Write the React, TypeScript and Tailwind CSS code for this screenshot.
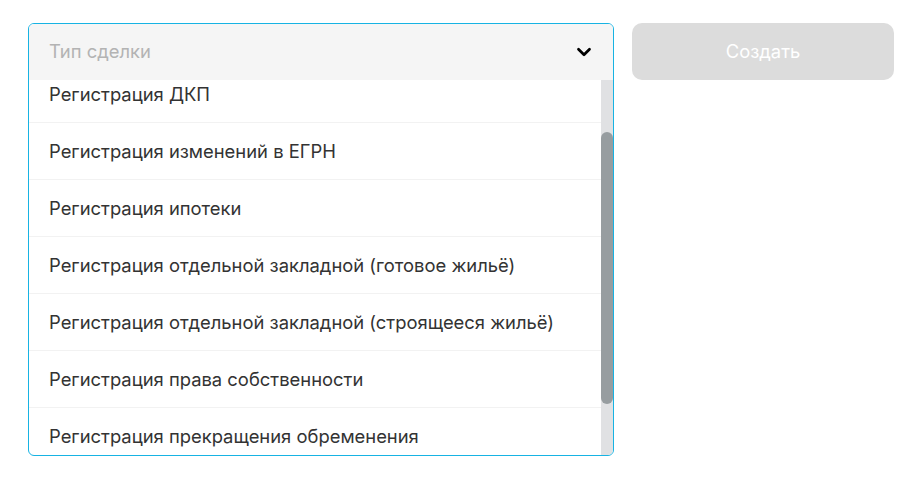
import { useLayoutEffect, useRef } from "react";
import { ChevronDown } from "lucide-react";

const dealTypes = [
  "Регистрация ДДУ",
  "Регистрация ДКП",
  "Регистрация изменений в ЕГРН",
  "Регистрация ипотеки",
  "Регистрация отдельной закладной (готовое жильё)",
  "Регистрация отдельной закладной (строящееся жильё)",
  "Регистрация права собственности",
  "Регистрация прекращения обременения",
  "Регистрация уступки права требования",
];

export default function App() {
  const listRef = useRef<HTMLUListElement>(null);

  useLayoutEffect(() => {
    if (listRef.current) listRef.current.scrollTop = 71;
  }, []);

  return (
    <div className="min-h-screen bg-white font-['Inter','Liberation_Sans',sans-serif]">
      <div className="flex items-start gap-[18px] pl-[28px] pt-[23px]">
        {/* Select */}
        <div className="w-[586px] h-[433px] flex flex-col border border-[#17b3e3] rounded-[6px] overflow-hidden">
          <button
            type="button"
            className="h-[56px] shrink-0 flex items-center justify-between bg-[#f5f5f5] pl-[20px] pr-[18px] text-left"
          >
            <span className="text-[18.4px] text-[#b3b3b3]">Тип сделки</span>
            <ChevronDown className="w-[22px] h-[22px] text-black" strokeWidth={3} />
          </button>
          <div className="flex-1 min-h-0 flex">
            <ul ref={listRef} className="flex-1 overflow-hidden">
              {dealTypes.map((t, i) => (
                <li
                  key={i}
                  className="h-[57px] flex items-center pl-[20px] pt-[2px] text-[18.4px] text-[#333333] border-b border-[#f2f2f2] last:border-b-0"
                >
                  {t}
                </li>
              ))}
            </ul>
            {/* scrollbar */}
            <div className="w-[12px] shrink-0 bg-[#e0e1e3] pt-[52px]">
              <div className="h-[272px] rounded-full bg-[#979da0]" />
            </div>
          </div>
        </div>

        {/* Create button */}
        <button
          type="button"
          disabled
          className="w-[262px] h-[57px] rounded-[10px] bg-[#dcdcdc] text-white text-[18.4px]"
        >
          Создать
        </button>
      </div>
    </div>
  );
}
